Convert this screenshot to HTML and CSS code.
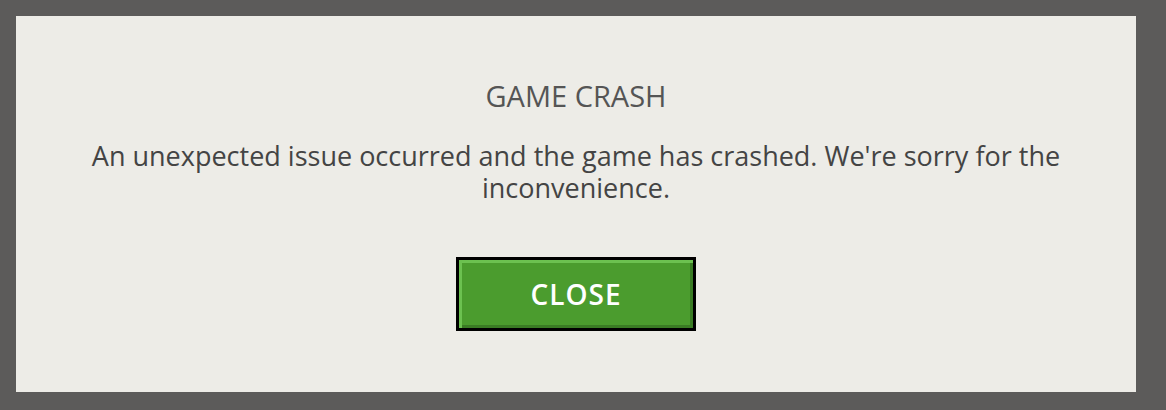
FILE: index.html
```html
<!DOCTYPE html>
<html lang="en">
<head>
  <meta charset="UTF-8">
  <title>Game Crash</title>
  <link rel="stylesheet" href="styles.css">
</head>
<body>
  <div class="dialog">
    <h2 class="dialog-title">GAME CRASH</h2>
    <p class="dialog-text">An unexpected issue occurred and the game has crashed. We're sorry for the inconvenience.</p>
    <button class="close-btn">CLOSE</button>
  </div>
</body>
</html>
```

FILE: styles.css
```css
html, body {
  margin: 0;
  padding: 0;
  height: 100%;
}
body {
  background: #5c5b5a;
  font-family: 'Open Sans', 'Liberation Sans', sans-serif;
  padding: 16px 30px 18px 16px;
  box-sizing: border-box;
}
.dialog {
  background: #edece7;
  height: 376px;
  display: flex;
  flex-direction: column;
  align-items: center;
  padding: 0 50px;
  box-sizing: border-box;
  text-align: center;
}
.dialog-title {
  margin: 64px 0 0;
  font-size: 29px;
  font-weight: 500;
  color: #555;
  line-height: 32px;
}
.dialog-text {
  margin: 28px 0 0;
  font-size: 27px;
  color: #444;
  line-height: 32px;
}
.close-btn {
  margin-top: 53px;
  width: 240px;
  height: 74px;
  border: 3px solid #000;
  background: #4b9c2e;
  box-shadow: inset 3px 3px 0 #6cc150, inset -3px -3px 0 #3a7c24;
  color: #fff;
  font-family: 'Open Sans', 'Liberation Sans', sans-serif;
  font-size: 28px;
  font-weight: 600;
  letter-spacing: 1px;
  cursor: pointer;
}
```
